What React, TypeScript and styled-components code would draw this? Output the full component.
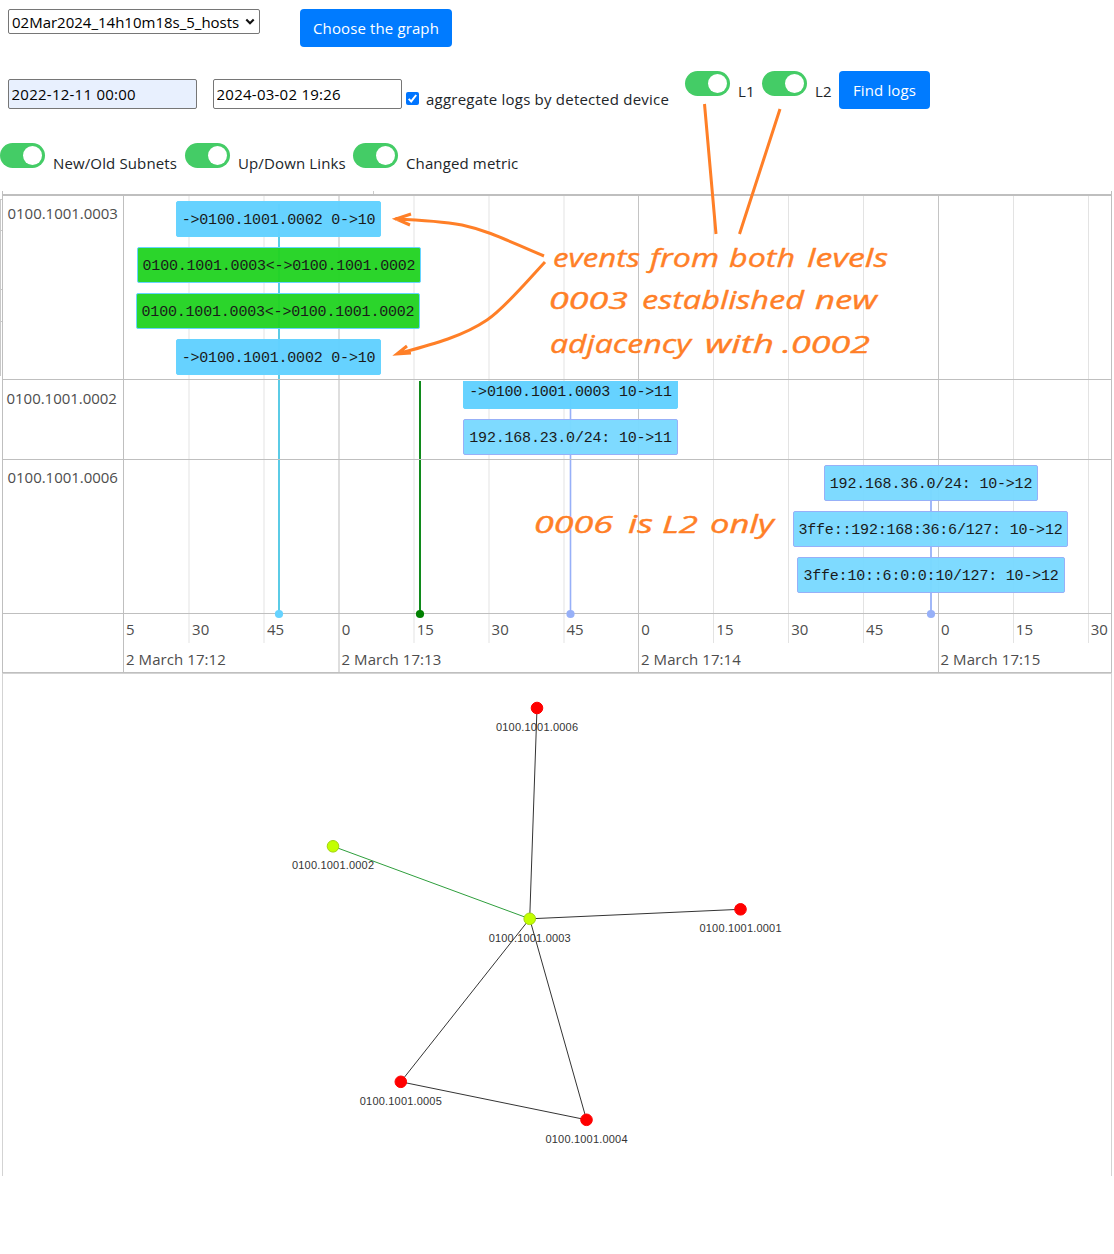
import React from 'react';
import styled, { createGlobalStyle } from 'styled-components';

const GlobalStyle = createGlobalStyle`
  * { box-sizing: border-box; }
  html, body { margin: 0; background: #fff; }
  body {
    font-family: "Open Sans", "Noto Sans", sans-serif;
    font-size: 15px;
    line-height: 24px;
    color: #212529;
    overflow: hidden;
  }
`;

const Page = styled.main`
  position: relative;
  width: 1114px;
  height: 1254px;
  overflow: hidden;
`;

const Controls = styled.header`
  display: flex;
  flex-direction: column;
  height: 191px;
`;

const GraphRow = styled.div`
  display: flex;
  align-items: flex-start;
  gap: 40px;
  padding: 9px 8px 0;
  height: 71px;
`;

const LogsRow = styled.div`
  display: flex;
  align-items: flex-start;
  height: 72px;
  padding-left: 8px;
`;

const FilterRow = styled.div`
  display: flex;
  align-items: flex-start;
`;

const SelectBox = styled.div`
  display: flex;
  align-items: center;
  position: relative;
  width: 252px;
  height: 25px;
  border: 1px solid #767676;
  border-radius: 2px;
`;

const Select = styled.select`
  appearance: none;
  width: 100%;
  height: 23px;
  padding: 0 0 0 3px;
  border: 0;
  background: transparent;
  color: #000;
  font: inherit;
  letter-spacing: 0;
`;

const Chevron = styled.svg`
  position: absolute;
  right: 4px;
  top: 8px;
`;

const Button = styled.button<{ $width: number }>`
  width: ${(p) => p.$width}px;
  height: 38px;
  padding: 0;
  border: 0;
  border-radius: 4px;
  background: #007bff;
  color: #fff;
  font: inherit;
  white-space: nowrap;
  letter-spacing: 0.12px;
`;

const DateInput = styled.input<{ $filled?: boolean }>`
  width: 189px;
  height: 30px;
  margin: 8px 16px 0 0;
  padding: 1px 2.5px;
  border: 1px solid #767676;
  border-radius: 2px;
  background: ${(p) => (p.$filled ? '#e8f0fe' : '#fff')};
  color: #000;
  font: inherit;
  letter-spacing: 0.25px;
  &:nth-of-type(2) { margin-right: 4px; }
`;

const Check = styled.span`
  display: flex;
  width: 13px;
  height: 13px;
  margin-top: 21px;
  border-radius: 2px;
  background: #0075ff;
`;

const Caption = styled.span<{ $top: number; $left?: number; $width: number; $track?: number }>`
  width: ${(p) => p.$width}px;
  margin: ${(p) => p.$top}px 0 0 ${(p) => p.$left ?? 8}px;
  white-space: nowrap;
  letter-spacing: ${(p) => p.$track ?? 0.13}px;
`;

const Switch = styled.span`
  display: flex;
  flex: none;
  justify-content: flex-end;
  width: 45px;
  height: 25px;
  padding: 3px;
  border-radius: 13px;
  background: #44cc66;
  &::after {
    content: '';
    width: 19px;
    height: 19px;
    border-radius: 50%;
    background: #fff;
  }
`;

const Timeline = styled.section`
  position: relative;
  height: 482px;
  margin: 0 2px;
  padding-top: 3px;
  border-left: 1px solid #bfbfbf;
  border-right: 1px solid #bfbfbf;
  color: #4d4d4d;
`;

const Backdrop = styled.svg`
  position: absolute;
  left: -3px;
  top: 0;
  pointer-events: none;
`;

const Groups = styled.div`
  position: relative;
  border-top: 2px solid #bfbfbf;
`;

const Group = styled.div<{ $height: number }>`
  display: grid;
  grid-template-columns: 121px 1fr;
  height: ${(p) => p.$height}px;
  border-bottom: 1px solid #bfbfbf;
`;

const GroupLabel = styled.div<{ $top: number; $left: number }>`
  padding: ${(p) => p.$top}px 0 0 ${(p) => p.$left}px;
  border-right: 1px solid #bfbfbf;
  letter-spacing: -0.03px;
`;

const Track = styled.div`
  position: relative;
  margin-top: 1px;
  overflow: hidden;
`;

const Event = styled.div<{ $left: number; $top: number; $width: number; $kind: 'metric' | 'link' | 'subnet' }>`
  position: absolute;
  left: ${(p) => p.$left}px;
  top: ${(p) => p.$top}px;
  width: ${(p) => p.$width}px;
  height: 36px;
  border: 1px solid ${(p) => (p.$kind === 'subnet' ? '#97b0f8' : '#66d3ff')};
  border-radius: 2px;
  background: ${(p) =>
    ({ metric: 'rgba(97,209,255,.97)', link: 'rgba(34,211,34,.96)', subnet: 'rgba(122,217,255,.97)' })[p.$kind]};
  color: #1a1a1a;
  font: 15px/37px "Liberation Mono", monospace;
  letter-spacing: -0.2px;
  text-align: center;
  white-space: pre;
`;

const Axis = styled.div`
  position: relative;
  display: grid;
  grid-template-columns: 121px 1fr;
  height: 59px;
  border-bottom: 1px solid #bfbfbf;
`;

const AxisCorner = styled.div`
  border-right: 1px solid #bfbfbf;
`;

const AxisScale = styled.div`
  display: flex;
  flex-direction: column;
  overflow: hidden;
`;

const Ticks = styled.div`
  display: flex;
  flex: none;
  height: 30px;
  padding-top: 3px;
`;

const Tick = styled.span<{ $width: number }>`
  flex: none;
  width: ${(p) => p.$width}px;
  padding-left: 2px;
  white-space: nowrap;
  letter-spacing: 0.07px;
`;

const Network = styled.section`
  height: 503px;
  margin: 0 2px;
  border: 1px solid #d3d3d3;
  border-bottom: 0;
`;

const NetworkCanvas = styled.svg`
  display: block;
  margin: -1px 0 0 -1px;
`;

const Notes = styled.svg`
  position: absolute;
  left: 0;
  top: 0;
  pointer-events: none;
`;

type EventData = [number, number, number, 'metric' | 'link' | 'subnet', string];

const groups: { name: string; height: number; top: number; left: number; events: EventData[] }[] = [
  {
    name: '0100.1001.0003', height: 184, top: 5, left: 4.5,
    events: [
      [52, 4, 205, 'metric', '->0100.1001.0002 0->10'],
      [13, 50, 284, 'link', '0100.1001.0003<->0100.1001.0002'],
      [12, 96, 284, 'link', '0100.1001.0003<->0100.1001.0002'],
      [52, 142, 205, 'metric', '->0100.1001.0002 0->10'],
    ],
  },
  {
    name: '0100.1001.0002', height: 80, top: 6, left: 3.5,
    events: [
      [339, -8, 215, 'metric', '->0100.1001.0003 10->11'],
      [339, 38, 215, 'subnet', '192.168.23.0/24: 10->11'],
    ],
  },
  {
    name: '0100.1001.0006', height: 154, top: 5, left: 4.5,
    events: [
      [700, 4, 214, 'subnet', '192.168.36.0/24: 10->12'],
      [669, 50, 275, 'subnet', '3ffe::192:168:36:6/127: 10->12'],
      [673, 96, 268, 'subnet', '3ffe:10::6:0:0:10/127: 10->12'],
    ],
  },
];

const gridLines = Array.from({ length: 13 }, (_, i) => {
  const major = i % 4 === 2;
  const wide = i < 6;
  return {
    x: Math.floor(188.6 + i * 75),
    width: wide ? 2 : 1,
    height: major ? 476 : 447,
    color: major ? (wide ? '#dedede' : '#c4c4c4') : wide ? '#f1f1f1' : '#e3e3e3',
  };
});

const stems = [
  { x: 279, from: 204, color: '#5bcbe6', dot: '#66d3ff', width: 2 },
  { x: 420, from: 381, color: '#108a1c', dot: '#008000', width: 2 },
  { x: 570.5, from: 385, color: '#97b0f8', dot: '#97b0f8', width: 1.6 },
  { x: 931, from: 470, color: '#97b0f8', dot: '#97b0f8', width: 1.8 },
];

const nodes: { id: string; x: number; y: number; active?: boolean }[] = [
  { id: '0100.1001.0006', x: 537, y: 708 },
  { id: '0100.1001.0002', x: 333, y: 846.3, active: true },
  { id: '0100.1001.0003', x: 529.7, y: 918.8, active: true },
  { id: '0100.1001.0001', x: 740.5, y: 909.3 },
  { id: '0100.1001.0005', x: 400.8, y: 1081.8 },
  { id: '0100.1001.0004', x: 586.5, y: 1119.8 },
];
const edges = [[0, 2], [1, 2], [2, 3], [2, 4], [2, 5], [4, 5]];

const words: [string, number, number, number, number?][] = [
  ['events', 553, 267, 87], ['from', 650, 267, 69], ['both', 729, 267, 66], ['levels', 807, 267, 81],
  ['0003', 549, 309, 79, 23.5], ['established', 642, 309, 162], ['new', 815, 309, 62],
  ['adjacency', 550, 353, 141], ['with', 705, 353, 69], ['.0002', 782, 353, 88, 23.5],
  ['0006', 534, 533, 79, 23.5], ['is', 628, 533, 25], ['L2', 662, 533, 36, 24], ['only', 710, 533, 64],
];

function Toggle() {
  return <Switch role="switch" aria-checked="true" />;
}

export default function App() {
  return (
    <Page>
      <GlobalStyle />
      <Controls>
        <GraphRow>
          <SelectBox>
            <Select><option>02Mar2024_14h10m18s_5_hosts</option></Select>
            <Chevron width="10" height="8" viewBox="0 0 10 8">
              <path d="M1.3 1.6 5 5.3 8.7 1.6" fill="none" stroke="#111" strokeWidth="2.1" />
            </Chevron>
          </SelectBox>
          <Button $width={152}>Choose the graph</Button>
        </GraphRow>
        <LogsRow>
          <DateInput $filled defaultValue="2022-12-11 00:00" />
          <DateInput defaultValue="2024-03-02 19:26" />
          <Check role="checkbox" aria-checked="true">
            <svg width="13" height="13" viewBox="0 0 13 13">
              <path d="M2.7 6.9 5.2 9.4 10.2 3" fill="none" stroke="#fff" strokeWidth="2" />
            </svg>
          </Check>
          <Caption $top={16} $left={7} $width={259} $track={0.22}>aggregate logs by detected device</Caption>
          <Toggle />
          <Caption $top={8} $width={24}>L1</Caption>
          <Toggle />
          <Caption $top={8} $width={24}>L2</Caption>
          <Button $width={91}>Find logs</Button>
        </LogsRow>
        <FilterRow>
          <Toggle />
          <Caption $top={8} $width={132}>New/Old Subnets</Caption>
          <Toggle />
          <Caption $top={8} $width={115}>Up/Down Links</Caption>
          <Toggle />
          <Caption $top={8} $width={130}>Changed metric</Caption>
        </FilterRow>
      </Controls>

      <Timeline>
        <Backdrop width="1114" height="482" viewBox="0 191 1114 482">
          <path d="M373.5 191V194" stroke="#ccc" />
          <path d="M.5 199V376M0 199.5H2M0 230.5H2M0 289.5H2M0 321.5H2" stroke="#c8c8c8" />
          {gridLines.map((g) => (
            <rect key={g.x} x={g.x} y="196" width={g.width} height={g.height} fill={g.color} />
          ))}
          {stems.map((s) => (
            <path key={s.x} d={`M${s.x} ${s.from}V613`} stroke={s.color} strokeWidth={s.width} />
          ))}
        </Backdrop>
        <Groups>
          {groups.map((g) => (
            <Group key={g.name} $height={g.height}>
              <GroupLabel $top={g.top} $left={g.left}>{g.name}</GroupLabel>
              <Track>
                {g.events.map(([left, top, width, kind, text], i) => (
                  <Event key={i} $left={left} $top={top} $width={width} $kind={kind}>{text}</Event>
                ))}
              </Track>
            </Group>
          ))}
        </Groups>
        <Axis>
          <AxisCorner />
          <AxisScale>
            <Ticks>
              <Tick $width={66}>5</Tick>
              {['30', '45', '0', '15', '30', '45', '0', '15', '30', '45', '0', '15', '30'].map((t, i) => (
                <Tick key={i} $width={74.9}>{t}</Tick>
              ))}
            </Ticks>
            <Ticks>
              <Tick $width={215.5}>2 March 17:12</Tick>
              <Tick $width={299.5}>2 March 17:13</Tick>
              <Tick $width={299.5}>2 March 17:14</Tick>
              <Tick $width={170}>2 March 17:15</Tick>
            </Ticks>
          </AxisScale>
        </Axis>
        <Backdrop width="1114" height="482" viewBox="0 191 1114 482">
          {stems.map((s) => <circle key={s.x} cx={s.x} cy="614" r="4.1" fill={s.dot} />)}
        </Backdrop>
      </Timeline>

      <Network>
        <NetworkCanvas width="1109" height="503" viewBox="2 673 1109 503">
          {edges.map(([a, b]) => (
            <line
              key={`${a}-${b}`}
              x1={nodes[a].x} y1={nodes[a].y} x2={nodes[b].x} y2={nodes[b].y}
              stroke={a === 1 ? '#2e9e3c' : '#343434'} strokeWidth="1"
            />
          ))}
          {nodes.map((n) => (
            <g key={n.id}>
              <circle cx={n.x} cy={n.y} r="5.8" fill={n.active ? '#c3ff00' : '#ff0000'} stroke={n.active ? '#a2d410' : '#ff0000'} />
              <text
                x={n.x} y={n.y + 23} textAnchor="middle" textLength="82"
                fontFamily="Liberation Sans, Arial, sans-serif" fontSize="11" fill="#343434"
              >{n.id}</text>
            </g>
          ))}
        </NetworkCanvas>
      </Network>

      <Notes width="1114" height="1254" viewBox="0 0 1114 1254">
        <g fill="none" stroke="#ff7f27" strokeWidth="3">
          <path d="M704.5 104 716 234M780 109 739.500 234" />
          <path d="M544 256C510 242 490 231 462 225C440 221 420 220 395 219M411 214 396 219 410 225" />
          <path d="M545 262C530 278 505 308 487 320C462 337 430 345 397 354M407 346 397 354 411 353" />
        </g>
        {words.map(([text, x, y, width, size]) => (
          <text
            key={text} x={x} y={y} textLength={width} lengthAdjust="spacingAndGlyphs"
            fontFamily="Open Sans, sans-serif" fontStyle="italic" fontWeight="500"
            fontSize={size ?? 26} fill="#ff7f27" stroke="#ff7f27" strokeWidth="0.4" strokeLinejoin="round"
          >{text}</text>
        ))}
      </Notes>
    </Page>
  );
}
